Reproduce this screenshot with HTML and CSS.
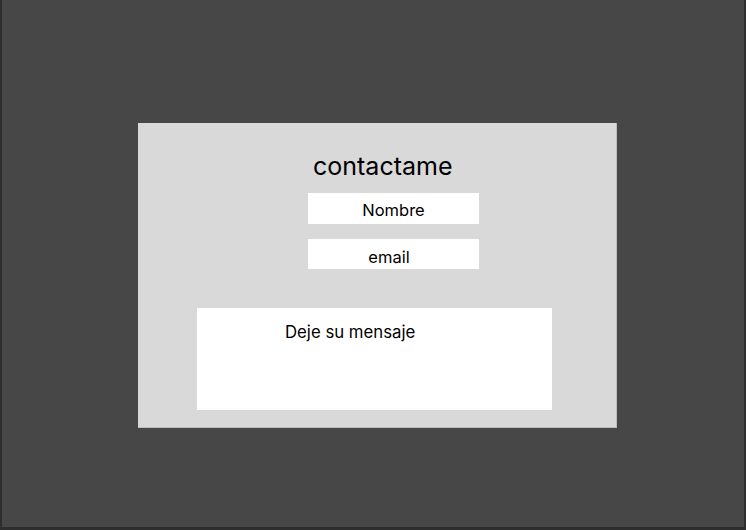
FILE: index.html
```html
<!DOCTYPE html>
<html lang="es">
<head>
<meta charset="utf-8">
<title>contactame</title>
<link rel="stylesheet" href="styles.css">
</head>
<body>
<div class="frame">
  <div class="card">
    <h1 class="title">contactame</h1>
    <div class="field field-name">Nombre</div>
    <div class="field field-email">email</div>
    <div class="message">Deje su mensaje</div>
  </div>
</div>
</body>
</html>
```
FILE: styles.css
```css
html, body {
  margin: 0;
  padding: 0;
  background: #474747;
}
.frame {
  box-sizing: border-box;
  width: 746px;
  height: 530px;
  background: #474747;
  border-left: 2px solid #2e2e2e;
  border-right: 2px solid #2e2e2e;
  border-bottom: 3px solid #2e2e2e;
  padding-top: 123px;
  padding-left: 136px;
  font-family: Inter, "Noto Sans", sans-serif;
  color: #000;
}
.card {
  box-sizing: border-box;
  width: 479px;
  height: 305px;
  background: #d9d9d9;
  border-right: 1px solid #bdbdbd;
  border-bottom: 1px solid #bdbdbd;
  padding-top: 28px;
  display: flex;
  flex-direction: column;
}
.title {
  margin: 0 0 12px 175px;
  font-size: 25px;
  font-weight: 400;
  line-height: 30px;
}
.field {
  box-sizing: border-box;
  margin-left: 170px;
  width: 171px;
  height: 31px;
  background: #fff;
  font-size: 16.5px;
  line-height: 19px;
  text-align: center;
}
.field-name {
  padding-top: 8px;
}
.field-email {
  margin-top: 15px;
  padding-top: 9px;
  padding-right: 9px;
  height: 30px;
}
.message {
  box-sizing: border-box;
  margin-top: 39px;
  margin-left: 59px;
  width: 355px;
  height: 102px;
  background: #fff;
  font-size: 16.75px;
  line-height: 20px;
  padding: 14px 0 0 88px;
}
```
